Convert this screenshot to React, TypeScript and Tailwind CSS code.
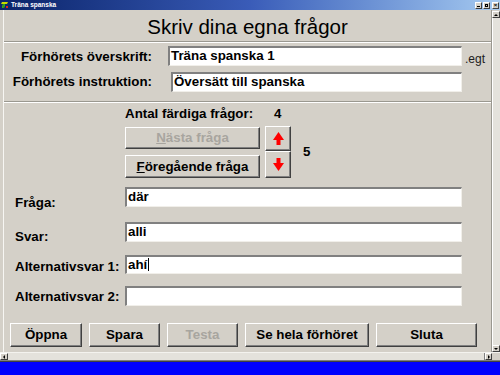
import React from "react"

function Field({ value, caret, className }: { value?: string; caret?: boolean; className: string }) {
  return (
    <div className={`flex items-start bg-white border-t-2 border-l-2 border-b border-r border-t-[#808080] border-l-[#808080] border-b-[#f1efea] border-r-[#f1efea] pl-[1px] text-[13.33px] font-bold leading-[16px] text-black ${className}`}>
      <span>{value}</span>
      {caret && <span className="ml-[1px] mt-[1px] inline-block h-[13px] w-px bg-black" />}
    </div>
  )
}

function Btn({ children, disabled, className }: { children: React.ReactNode; disabled?: boolean; className: string }) {
  return (
    <div
      className={`flex shrink-0 items-center justify-center bg-[#d4d0c8] border border-t-white border-l-white border-b-[#404040] border-r-[#404040] shadow-[inset_-1px_-1px_0_#808080] text-[13.33px] font-bold leading-none ${disabled ? "text-[#a8a59f]" : "text-black"} ${className}`}
    >
      {children}
    </div>
  )
}

function RedArrow({ down }: { down?: boolean }) {
  return (
    <svg width="11" height="13" viewBox="0 0 11 13" className={down ? "rotate-180" : ""}>
      <polygon points="5.5,0 11,8 7.5,8 7.5,13 3.5,13 3.5,8 0,8" fill="#ff0000" />
    </svg>
  )
}

function TinyArrow({ dir }: { dir: "up" | "down" | "left" | "right" }) {
  const pts = {
    up: "0,3 2,1 4,3",
    down: "0,1 2,3 4,1",
    left: "3,0 1,2 3,4",
    right: "1,0 3,2 1,4",
  }[dir]
  return (
    <svg width="4" height="4" viewBox="0 0 4 4">
      <polygon points={pts} fill="#000" />
    </svg>
  )
}

function SmallBtn({ children, className }: { children?: React.ReactNode; className: string }) {
  return (
    <div className={`flex shrink-0 items-center justify-center bg-[#d4d0c8] border border-t-white border-l-white border-b-[#404040] border-r-[#404040] ${className}`}>
      {children}
    </div>
  )
}

export default function App() {
  return (
    <div className="w-[500px] h-[375px] bg-[#d4d0c8] flex flex-col overflow-hidden font-['Liberation_Sans',Arial,sans-serif] text-black select-none">
      {/* title bar */}
      <div className="h-[10px] shrink-0 flex items-center bg-gradient-to-r from-[#0a246a] via-[#3a5cb8] to-[#a6caf0] px-[1px]">
        <svg width="8" height="8" viewBox="0 0 8 8">
          <polygon points="1,1 7,1 6,3 4,3 3,7 1,7 2,3 0,3" fill="#c8d800" />
          <polygon points="2,3 4,3 3,7 1,7" fill="#20a020" />
          <rect x="5" y="5" width="2" height="2" fill="#e02020" />
        </svg>
        <span className="ml-[2px] text-[6.5px] leading-none text-white font-bold">Träna spanska</span>
        <div className="ml-auto flex items-center gap-[1px]">
          <SmallBtn className="w-[7px] h-[7px]">
            <span className="mt-[3px] h-px w-[3px] bg-black" />
          </SmallBtn>
          <SmallBtn className="w-[7px] h-[7px]">
            <span className="h-[3px] w-[3px] border border-black" />
          </SmallBtn>
          <SmallBtn className="ml-[1px] w-[7px] h-[7px] text-[6px] leading-none font-bold">×</SmallBtn>
        </div>
      </div>

      <div className="flex h-[342px] shrink-0">
        <div className="w-[3px]" />
        {/* main form */}
        <div className="flex-1 flex flex-col border-l border-r border-l-[#f7f6f3] border-r-[#9a9890]">
          <div className="h-[31px] shrink-0 pt-[7px] text-center text-[20.5px] leading-[20px]">Skriv dina egna frågor</div>
          <div className="h-[2px] shrink-0 border-t border-b border-t-[#9a9890] border-b-white" />

          <div className="h-[58px] shrink-0 pt-[3px] flex flex-col">
            <div className="flex items-start">
              <div className="w-[148px] pt-[1px] text-right text-[13.33px] font-bold leading-[20px]">Förhörets överskrift:</div>
              <Field value="Träna spanska 1" className="ml-[16px] w-[294px] h-[20px]" />
              <span className="ml-[3px] pt-[6px] text-[12px] leading-[14px] text-[#202020]">.egt</span>
            </div>
            <div className="mt-[5px] flex items-start">
              <div className="w-[148px] text-right text-[13.33px] font-bold leading-[20px]">Förhörets instruktion:</div>
              <Field value="Översätt till spanska" className="ml-[19px] w-[291px] h-[20px]" />
            </div>
          </div>
          <div className="h-[2px] shrink-0 border-t border-b border-t-[#9a9890] border-b-white" />

          <div className="flex-1 flex flex-col text-[13.33px] font-bold">
            <div className="h-[19px] shrink-0 pt-[3px] pl-[121px] flex leading-[16px]">
              <span className="w-[149px]">Antal färdiga frågor:</span>
              <span>4</span>
            </div>

            <div className="mt-[4px] h-[52px] shrink-0 pl-[121px] flex items-center">
              <div className="w-[135px] h-full flex flex-col pt-[1px] gap-[6px]">
                <Btn disabled className="h-[22px]">
                  <span><span className="underline">N</span>ästa fråga</span>
                </Btn>
                <Btn className="h-[23px]">
                  <span><span className="underline">F</span>öregående fråga</span>
                </Btn>
              </div>
              <div className="ml-[5px] w-[26px] h-full flex flex-col">
                <Btn className="h-[25px]"><RedArrow /></Btn>
                <Btn className="h-[27px]"><RedArrow down /></Btn>
              </div>
              <span className="ml-[12px] leading-[16px]">5</span>
            </div>

            <div className="mt-[9px] h-[20px] shrink-0 pl-[11px] flex items-start">
              <div className="w-[110px] pt-[8px] leading-[16px]">Fråga:</div>
              <Field value="där" className="w-[337px] h-[20px]" />
            </div>
            <div className="mt-[15px] h-[20px] shrink-0 pl-[11px] flex items-start">
              <div className="w-[110px] pt-[7px] leading-[16px]">Svar:</div>
              <Field value="alli" className="w-[337px] h-[20px]" />
            </div>
            <div className="mt-[13px] h-[19px] shrink-0 pl-[11px] flex items-start">
              <div className="w-[110px] pt-[4px] leading-[16px]">Alternativsvar 1:</div>
              <Field value="ahí" caret className="w-[337px] h-[19px]" />
            </div>
            <div className="mt-[12px] h-[20px] shrink-0 pl-[11px] flex items-start">
              <div className="w-[110px] pt-[3px] leading-[16px]">Alternativsvar 2:</div>
              <Field className="w-[337px] h-[20px]" />
            </div>

            <div className="mt-[17px] shrink-0 pl-[6px] flex gap-[7px]">
              <Btn className="w-[72px] h-[24px]">Öppna</Btn>
              <Btn className="w-[71px] h-[24px]">Spara</Btn>
              <Btn disabled className="w-[71px] h-[24px]">Testa</Btn>
              <Btn className="w-[124px] h-[24px]">Se hela förhöret</Btn>
              <Btn className="w-[101px] h-[24px]">Sluta</Btn>
            </div>
          </div>
        </div>

        {/* vertical scrollbar */}
        <div className="w-[8px] flex flex-col pt-[1px] bg-[#d4d0c8]">
          <SmallBtn className="h-[7px]"><TinyArrow dir="up" /></SmallBtn>
          <div className="flex-1 bg-[#e4e2dc] border-l border-l-white" />
          <SmallBtn className="h-[7px]"><TinyArrow dir="down" /></SmallBtn>
        </div>
      </div>

      {/* horizontal scrollbar */}
      <div className="h-[8px] shrink-0 flex border-t border-t-[#f4f3ef]">
        <SmallBtn className="w-[8px]"><TinyArrow dir="left" /></SmallBtn>
        <div className="flex-1 bg-[#e4e2dc] border-r border-r-[#808080]" />
        <SmallBtn className="w-[7px]"><TinyArrow dir="right" /></SmallBtn>
        <div className="w-[8px] bg-[#d4d0c8]" />
      </div>
      <div className="h-[2px] shrink-0 border-t border-b border-t-[#808080] border-b-[#404040]" />
      <div className="flex-1 bg-[#0000fe]" />
    </div>
  )
}
